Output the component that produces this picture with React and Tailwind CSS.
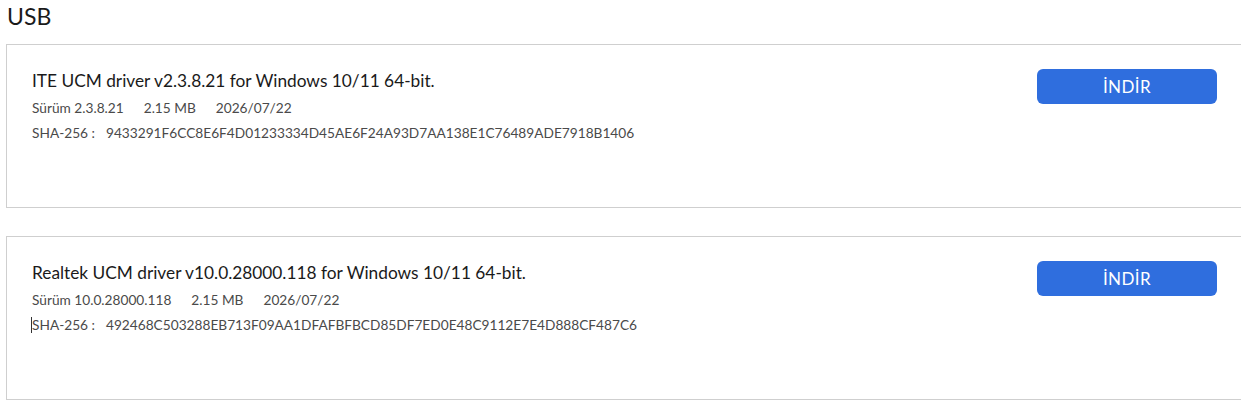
import React from 'react';

const drivers = [
  {
    title: 'ITE UCM driver v2.3.8.21 for Windows 10/11 64-bit.',
    version: '2.3.8.21',
    size: '2.15 MB',
    date: '2026/07/22',
    sha: '9433291F6CC8E6F4D01233334D45AE6F24A93D7AA138E1C76489ADE7918B1406',
  },
  {
    title: 'Realtek UCM driver v10.0.28000.118 for Windows 10/11 64-bit.',
    version: '10.0.28000.118',
    size: '2.15 MB',
    date: '2026/07/22',
    sha: '492468C503288EB713F09AA1DFAFBFBCD85DF7ED0E48C9112E7E4D888CF487C6',
    caret: true,
  },
];

const DriverCard = ({ driver }) => (
  <div className="w-[1250px] h-[164px] border border-[#cfcfcf] bg-white flex justify-between pl-[25px] pr-[38px] pt-[24px]">
    <div>
      <h3 className="text-[17.3px] leading-[24px] text-[#1a1a1a]">{driver.title}</h3>
      <div className="mt-[6px] flex text-[13.7px] leading-[18px] text-[#4a4a4a]">
        <span>Sürüm {driver.version}</span>
        <span className="ml-[20px]">{driver.size}</span>
        <span className="ml-[20px]">{driver.date}</span>
      </div>
      <div className="mt-[7px] flex text-[13.7px] leading-[18px] text-[#4a4a4a] relative">
        {driver.caret && <span className="absolute left-[-1px] top-[1px] w-px h-[16px] bg-[#333]" />}
        <span>SHA-256 :</span>
        <span className="ml-[11px]">{driver.sha}</span>
      </div>
    </div>
    <button className="w-[180px] h-[35px] rounded-[6px] bg-[#2f6ede] text-white text-[17px] leading-none tracking-wide">
      İNDİR
    </button>
  </div>
);

export default function App() {
  return (
    <div className="w-[1241px] h-[401px] overflow-hidden bg-white font-['Lato','Noto_Sans',sans-serif]">
      <h2 className="pl-[7px] pt-[1px] text-[23px] leading-[30px] text-[#1a1a1a]">USB</h2>
      <div className="pl-[6px] mt-[13px] flex flex-col gap-[28px]">
        {drivers.map((d) => (
          <DriverCard key={d.sha} driver={d} />
        ))}
      </div>
    </div>
  );
}
